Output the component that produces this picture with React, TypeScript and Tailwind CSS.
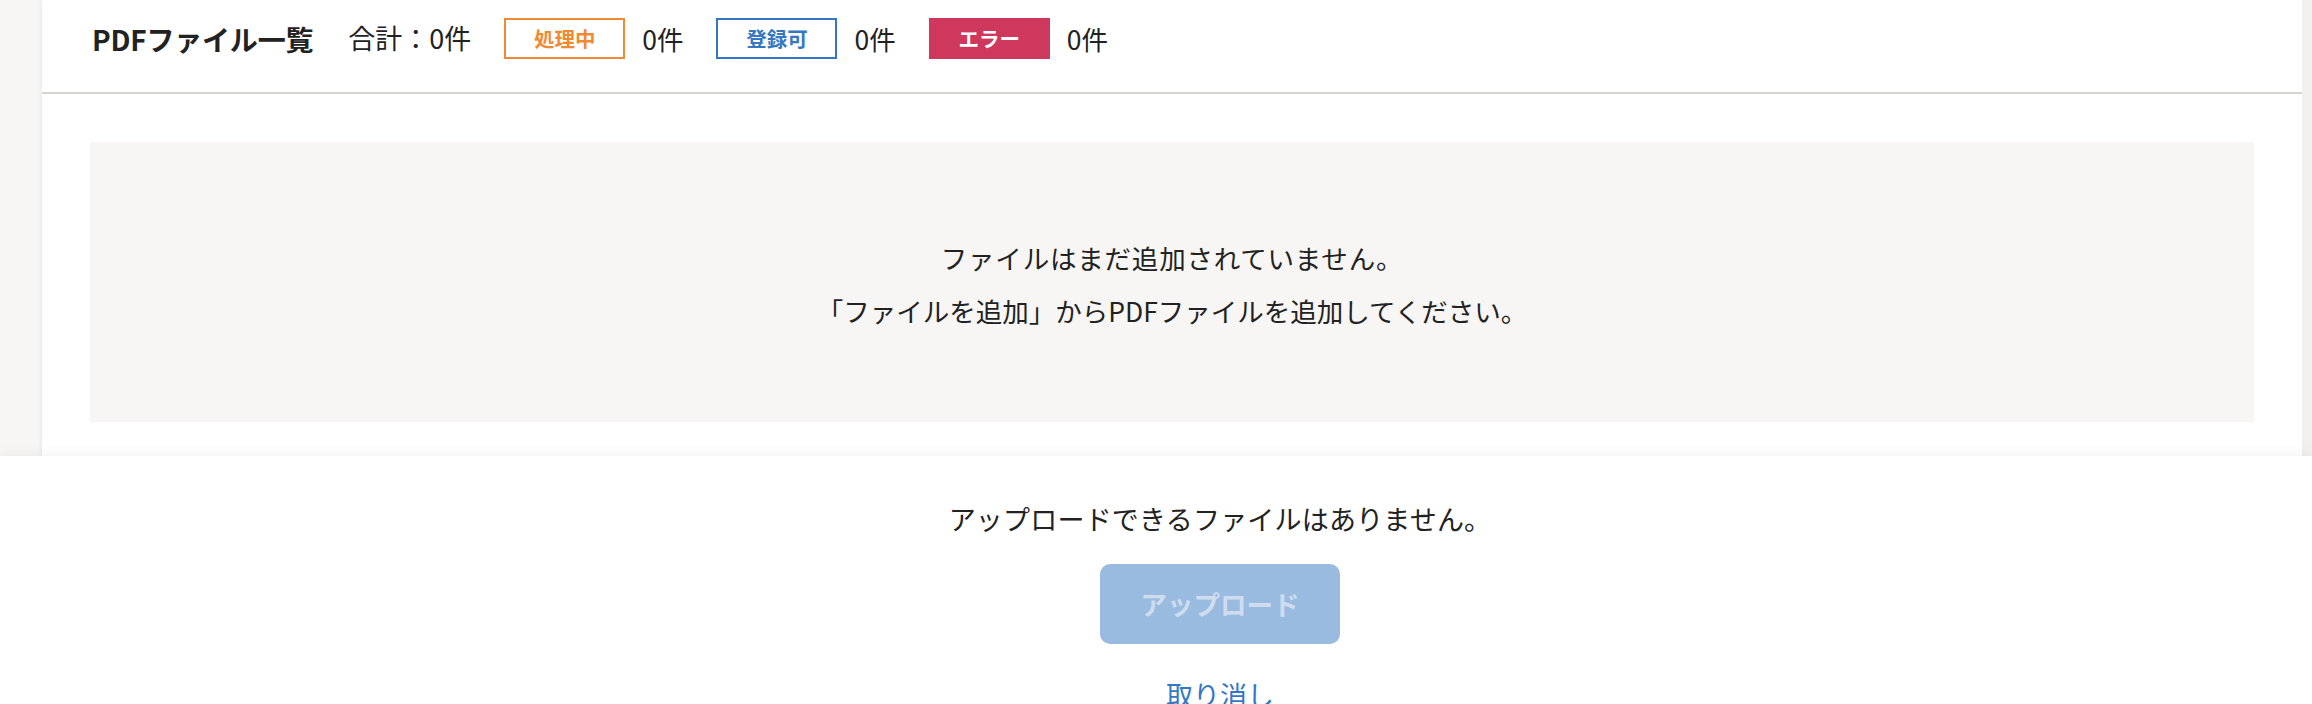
import React from "react";

type Count = { label: string; count: number; className: string };

const counts: Count[] = [
  {
    label: "処理中",
    count: 0,
    className: "border-2 border-[#ef8a33] text-[#ef8a33] bg-white",
  },
  {
    label: "登録可",
    count: 0,
    className: "border-2 border-[#3677c4] text-[#3677c4] bg-white",
  },
  {
    label: "エラー",
    count: 0,
    className: "border-2 border-[#cf385d] text-white bg-[#cf385d]",
  },
];

const Badge = ({ item }: { item: Count }) => (
  <div className="flex items-center">
    <span
      className={`flex h-[41px] w-[121px] items-center justify-center text-[20.5px] font-bold ${item.className}`}
    >
      {item.label}
    </span>
    <span className="ml-[17px] text-[26.5px]">{item.count}件</span>
  </div>
);

const PdfListHeader = () => (
  <div className="flex h-[94px] items-center border-b-2 border-[#d4d4ce] pl-[50px] pb-[15px]">
    <h2 className="text-[28px] font-bold tracking-[-0.2px]">PDFファイル一覧</h2>
    <span className="ml-[35px] text-[27px]">合計：0件</span>
    <div className="ml-[33px] flex items-center gap-[33px]">
      {counts.map((c) => (
        <Badge key={c.label} item={c} />
      ))}
    </div>
  </div>
);

const EmptyState = () => (
  <div className="p-[48px]">
    <div className="flex h-[280px] flex-col items-center justify-center bg-[#f7f6f4] pt-[4px] text-[26.5px] leading-[53px] text-[#222]">
      <p className="tracking-[0.8px]">ファイルはまだ追加されていません。</p>
      <p>「ファイルを追加」からPDFファイルを追加してください。</p>
    </div>
  </div>
);

const UploadFooter = () => (
  <div className="relative flex flex-1 flex-col items-center bg-white pl-[128px] pt-[43px] shadow-[0_-4px_10px_rgba(0,0,0,0.045)]">
    <p className="text-[27px] leading-[40px] tracking-[0.2px] text-[#222]">
      アップロードできるファイルはありません。
    </p>
    <button
      type="button"
      disabled
      className="mt-[25px] flex h-[80px] w-[240px] items-center justify-center rounded-[10px] bg-[#9abbe0] text-[26.5px] font-bold text-[#cfdcee]"
    >
      アップロード
    </button>
    <button
      type="button"
      className="mt-[31px] text-[27px] leading-[40px] text-[#3677c4]"
    >
      取り消し
    </button>
  </div>
);

export default function App() {
  return (
    <div
      className="flex h-[704px] w-[2312px] flex-col overflow-hidden bg-[#f7f6f4] text-[#222]"
      style={{ fontFamily: '"Noto Sans CJK JP", "Noto Sans", sans-serif' }}
    >
      <div className="flex h-[456px] shrink-0">
        <div className="w-[42px] shrink-0" />
        <div className="flex-1 bg-white shadow-[0_0_6px_rgba(0,0,0,0.08)]">
          <PdfListHeader />
          <EmptyState />
        </div>
        <div className="w-[10px] shrink-0 bg-[#f1f0ee]" />
      </div>
      <UploadFooter />
    </div>
  );
}
